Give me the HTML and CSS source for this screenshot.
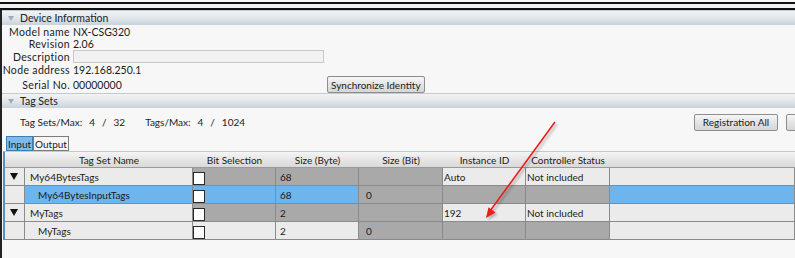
FILE: index.html
```html
<!DOCTYPE html>
<html lang="en">
<head>
  <meta charset="UTF-8" />
  <title>Tag Data Link Settings</title>
  <link rel="stylesheet" href="styles.css">
</head>
<body>
  <div class="screen">
    <div class="titlebar"></div>
    <div class="frame">
      <section class="group">
        <header class="group-head"><span class="caret"></span>Device Information</header>
        <div class="info">
          <span class="lbl">Model name</span><span class="val">NX-CSG320</span>
          <span class="lbl">Revision</span><span class="val">2.06</span>
          <span class="lbl">Description</span><span class="val"><span class="textbox"></span></span>
          <span class="lbl">Node address</span><span class="val">192.168.250.1</span>
          <span class="lbl">Serial No.</span>
          <span class="val serial"><span>00000000</span><button class="btn">Synchronize Identity</button></span>
        </div>
      </section>

      <section class="group">
        <header class="group-head"><span class="caret"></span>Tag Sets</header>
        <div class="counts">
          <span class="count-lbl">Tag Sets/Max:</span><span class="num">4</span><span class="num">/</span><span class="num">32</span>
          <span class="count-lbl second">Tags/Max:</span><span class="num">4</span><span class="num">/</span><span class="num">1024</span>
          <div class="actions">
            <button class="btn">Registration All</button>
            <button class="btn cut"></button>
          </div>
        </div>

        <div class="tabs">
          <span class="tab active">Input</span><span class="tab">Output</span>
        </div>

        <div class="grid">
          <div class="hd"></div>
          <div class="hd">Tag Set Name</div>
          <div class="hd">Bit Selection</div>
          <div class="hd">Size (Byte)</div>
          <div class="hd">Size (Bit)</div>
          <div class="hd">Instance ID</div>
          <div class="hd">Controller Status</div>
          <div class="hd last"></div>

          <div class="c light"><span class="expander"></span></div>
          <div class="c light name">My64BytesTags</div>
          <div class="c dark"><span class="check"></span></div>
          <div class="c dark">68</div>
          <div class="c dark"></div>
          <div class="c light tight">Auto</div>
          <div class="c light tight">Not included</div>
          <div class="c light"></div>

          <div class="c light"></div>
          <div class="c blue name sub">My64BytesInputTags</div>
          <div class="c blue"><span class="check"></span></div>
          <div class="c blue">68</div>
          <div class="c dark wide">0</div>
          <div class="c dark"></div>
          <div class="c dark"></div>
          <div class="c blue"></div>

          <div class="c light"><span class="expander"></span></div>
          <div class="c light name">MyTags</div>
          <div class="c dark"><span class="check"></span></div>
          <div class="c dark">2</div>
          <div class="c dark"></div>
          <div class="c light tight">192</div>
          <div class="c light tight">Not included</div>
          <div class="c light"></div>

          <div class="c light"></div>
          <div class="c light name sub">MyTags</div>
          <div class="c light"><span class="check"></span></div>
          <div class="c light">2</div>
          <div class="c dark wide">0</div>
          <div class="c dark"></div>
          <div class="c dark"></div>
          <div class="c light"></div>
        </div>
      </section>
    </div>

    <svg class="arrow" width="795" height="258" viewBox="0 0 795 258">
      <line x1="555" y1="122" x2="490" y2="211" stroke="#ee1c1c" stroke-width="1.6" />
      <polygon points="486,218 495.5,212.5 488.5,207.3" fill="#ee1c1c" />
    </svg>
  </div>
</body>
</html>
```

FILE: styles.css
```css
body {
  margin: 0;
  font-family: Lato, 'Open Sans', sans-serif;
  font-size: 10px;
  color: #1b1b1b;
  background-color: #f7f7f7;
}
.screen {
  position: relative;
  width: 795px;
  height: 258px;
  overflow: hidden;
  background-color: #f7f7f7;
}
.titlebar {
  margin-top: 2px;
  height: 4px;
  background-color: #f1f1f1;
  border-top: 2px solid #111;
  border-bottom: 2px solid #111;
}
.frame {
  border-left: 2px solid #222;
  height: 248px;
  overflow: hidden;
}
.group-head {
  display: flex;
  align-items: center;
  height: 14px;
  padding-left: 6px;
  border-top: 1px solid #c4c9ce;
  background: linear-gradient(#f1f4f6, #dfe5ea 55%, #c9d2da);
  color: #222;
  font-size: 10.5px;
}
.caret {
  width: 0;
  height: 0;
  margin-right: 6px;
  border-left: 3.5px solid transparent;
  border-right: 3.5px solid transparent;
  border-top: 5px solid #a3abb3;
}

/* device information */
.info {
  display: grid;
  grid-template-columns: 68px 1fr;
  grid-template-rows: 13px 12px 13px 13px 17px;
  column-gap: 3px;
  align-items: center;
  height: 68px;
  font-size: 10.5px;
}
.lbl {
  text-align: right;
  letter-spacing: 0.35px;
  white-space: nowrap;
}
.textbox {
  display: block;
  width: 249px;
  height: 11px;
  border: 1px solid #c9c9c9;
  background-color: #f1f1f1;
}
.serial {
  display: grid;
  grid-template-columns: 254px auto;
  align-items: center;
}
.btn {
  font-family: inherit;
  font-size: 10px;
  color: #1b1b1b;
  height: 17px;
  padding: 0 3px;
  border: 1px solid #8d8d8d;
  border-radius: 2px;
  background: linear-gradient(#f6f6f6, #e4e4e4 50%, #d6d6d6);
  justify-self: start;
}

/* tag sets */
.counts {
  display: flex;
  align-items: center;
  height: 28px;
  padding-left: 18px;
}
.num {
  margin-left: 7px;
}
.count-lbl.second {
  margin-left: 20px;
}
.actions {
  display: flex;
  gap: 8px;
  margin-left: auto;
  margin-right: -75px;
}
.actions .btn {
  width: 84px;
}
.tabs {
  display: flex;
  height: 15px;
  padding-left: 4px;
}
.tab {
  display: flex;
  align-items: center;
  padding: 0 1px;
  border: 1px solid #7b7b7b;
  background-color: #f6f6f6;
}
.tab.active {
  background-color: #7cbbec;
  border-color: #3f7db0;
}
.grid {
  display: grid;
  grid-template-columns: 20px 168px 83px 83px 84px 83px 84px 1fr;
  grid-template-rows: 16px repeat(4, 18px);
  margin-left: 1px;
  border-top: 1px solid #a9d1f1;
  border-left: 2px solid #5d8fbd;
}
.hd {
  position: relative;
  display: flex;
  align-items: center;
  justify-content: center;
  background: linear-gradient(#f5f5f5, #e6e6e6 50%, #d9d9d9);
  border-bottom: 1px solid #9a9a9a;
  white-space: nowrap;
}
.hd::after {
  content: "";
  position: absolute;
  right: -1px;
  top: 3px;
  height: 10px;
  border-right: 1px solid #c0c0c0;
}
.hd.last::after {
  display: none;
}
.c {
  display: flex;
  align-items: center;
  padding-left: 4px;
  border-right: 1px solid #8a8a8a;
  border-bottom: 1px solid #8a8a8a;
  white-space: nowrap;
  overflow: hidden;
}
.c.name {
  padding-left: 5px;
}
.c.sub {
  padding-left: 13px;
}
.c.tight {
  padding-left: 1px;
}
.c.wide {
  padding-left: 7px;
}
.light {
  background-color: #ebebeb;
}
.dark {
  background-color: #a9a9a9;
}
.blue {
  background-color: #6db5ec;
}
.check {
  width: 10px;
  height: 11px;
  margin-left: -4px;
  margin-top: 3px;
  border: 1px solid #2a2a2a;
  background-color: #fff;
}
.expander {
  width: 0;
  height: 0;
  margin-left: 1px;
  border-left: 4.5px solid transparent;
  border-right: 4.5px solid transparent;
  border-top: 7px solid #111;
}
.arrow {
  position: absolute;
  top: 0;
  left: 0;
  pointer-events: none;
  filter: drop-shadow(2px 2px 1px rgba(0, 0, 0, 0.25));
}
```
